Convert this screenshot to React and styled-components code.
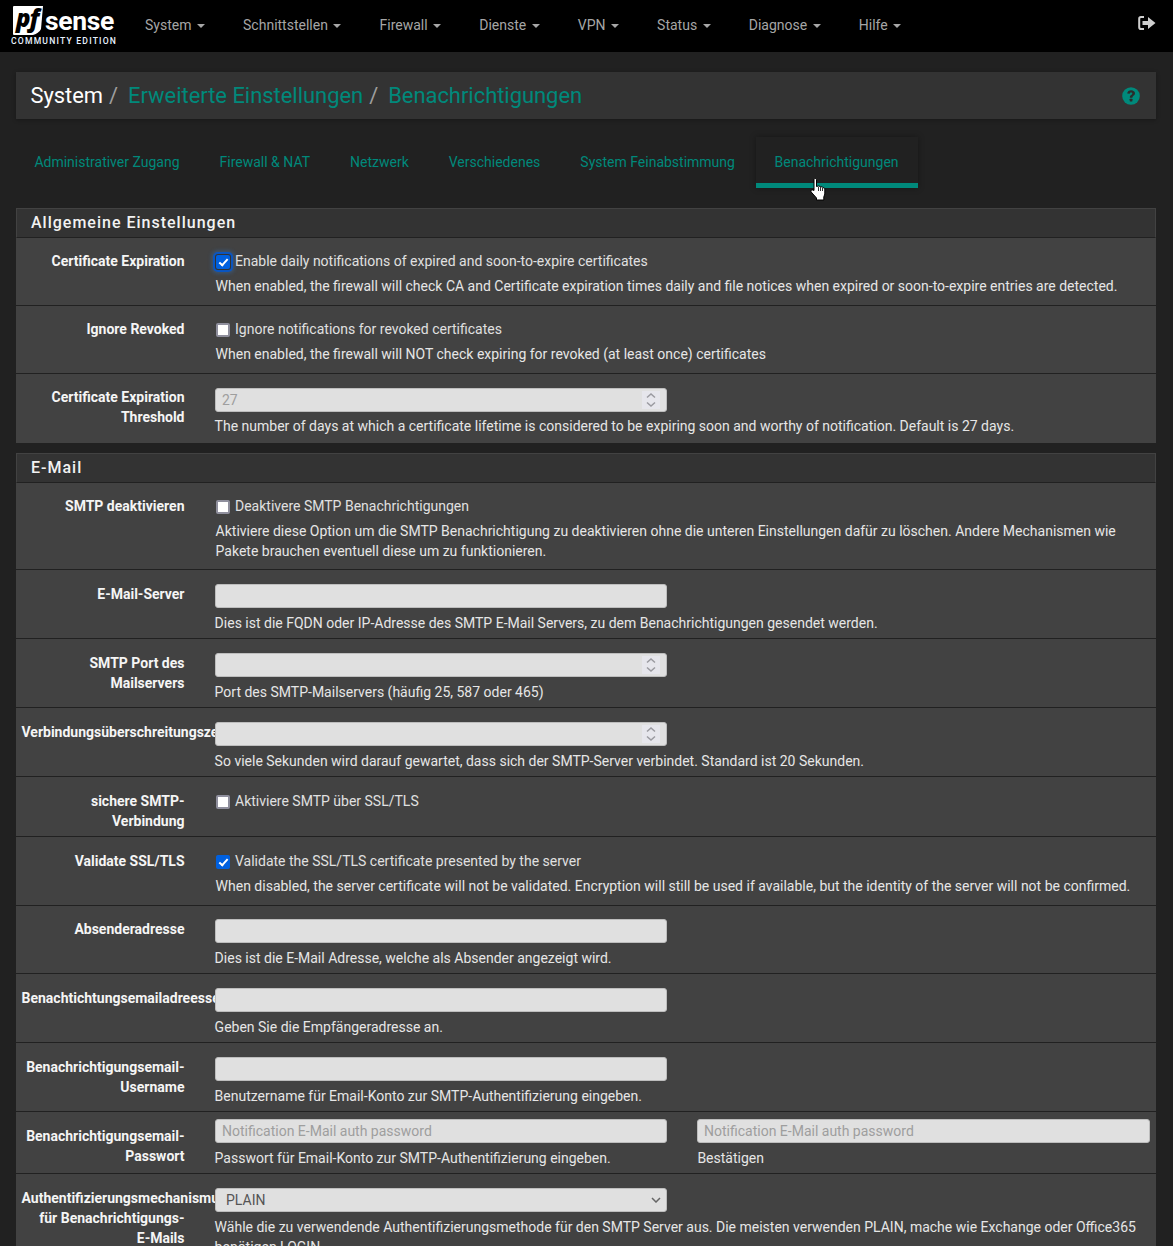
import React from "react";
import styled, { createGlobalStyle } from "styled-components";

const Global = createGlobalStyle`
  html, body { margin: 0; padding: 0; background: #212121; }
  body { font-family: Roboto, "Liberation Sans", sans-serif; font-size: 14px; line-height: 20px; color: #e0e0e0; }
  #root { height: 1246px; overflow: hidden; position: relative; }
`;

const Nav = styled.header`
  height: 52px; background: #000; display: flex; align-items: center; position: relative;
`;
const Logo = styled.div`
  width: 126px; flex: none; height: 52px; display: flex; flex-direction: column; padding: 5px 0 0 11px; box-sizing: border-box;
`;
const LogoTop = styled.div`
  display: flex; align-items: center; height: 31px; margin-left: 2px; gap: 2px;
`;
const LogoWord = styled.span`
  font: 700 26.5px/30px Roboto, sans-serif; color: #fff; letter-spacing: -0.35px; margin-top: 1px;
`;
const LogoSub = styled.span`
  font: 500 8.6px/10px Roboto, sans-serif; letter-spacing: 1.2px; color: #e8f2ff; white-space: nowrap; margin-top: 0;
`;
const NavItem = styled.a`
  padding: 0 19px 3px; color: #a6a6a6; font-size: 14px; display: inline-flex; align-items: center; white-space: nowrap;
`;
const Caret = styled.i`
  display: inline-block; margin-left: 5.6px; margin-top: 2px; width: 0; height: 0; border-top: 4px solid #a6a6a6; border-left: 4px solid transparent; border-right: 4px solid transparent;
`;
const LogoutIcon = styled.svg`
  position: absolute; right: 17px; top: 15px;
`;

const Main = styled.main`
  padding: 20px 17px 0 16px;
`;
const Crumbs = styled.div`
  height: 47px; background: #333; display: flex; align-items: center; padding: 0 16px 0 14.4px; box-shadow: 0 1px 4px rgba(0,0,0,.3);
  font-size: 21.9px;
`;
const Crumb = styled.a`
  color: ${p => (p.$root ? "#fff" : "#00897b")};
`;
const Slash = styled.span`
  color: #9e9e9e; margin: 0 10px 0 6px;
`;
const HelpIcon = styled.svg`
  margin-left: auto;
`;

const Tabs = styled.nav`
  display: flex; gap: 4px; height: 51px; margin-top: 18px; padding-left: 0.4px;
`;
const Tab = styled.a`
  box-sizing: border-box; padding: 15px 18px 0; color: #00897b; font-size: 14px; white-space: nowrap; height: 51px; position: relative;
  ${p => p.$active && "padding-left: 18.6px; padding-right: 19px; margin-left: -1px; border-bottom: 5px solid #00897b; box-shadow: 0 0 6px rgba(0,0,0,.35);"}
`;
const Cursor = styled.svg`
  position: absolute; left: 810px; top: 178px; z-index: 5;
`;

const Panel = styled.section`
  margin-top: ${p => p.$top}px;
`;
const PanelHead = styled.h2`
  margin: 0; height: 30px; box-sizing: border-box; background: #333; border: 1px solid #424242; border-bottom: 1px solid #212121;
  font-size: 16px; font-weight: 500; letter-spacing: 1px; line-height: 28px; padding-left: 14px; color: #f2f2f2;
`;
const Row = styled.div`
  display: grid; grid-template-columns: 184px 1fr; background: #424242; height: ${p => p.$h}px; box-sizing: border-box;
  border-bottom: ${p => (p.$last ? "0" : "1px solid #212121")};
`;
const Label = styled.div`
  padding: ${p => p.$top ?? 13}px 15.5px 0 5.5px; font-weight: 700; text-align: right; color: #f5f5f5;
`;
const NoBreak = styled.span`
  white-space: nowrap;
`;
const Control = styled.div`
  padding: ${p => p.$top ?? 13}px 15px 0 15px; position: relative; min-width: 0;
`;
const CheckLine = styled.label`
  display: flex; align-items: center; height: 20px; margin-left: 1px;
`;
const Check = styled.input.attrs({ type: "checkbox" })`
  appearance: none; box-sizing: border-box; width: 14px; height: 14px; margin: 1px 5px 0 0; flex: none; position: relative;
  background: #fff; border: 2px solid #8f8f9d; border-radius: 2px;
  &:checked { background: #0060df; border-color: #0060df; }
  &:checked::after {
    content: ""; position: absolute; left: 3px; top: 0; width: 3px; height: 7px;
    border: solid #fff; border-width: 0 2px 2px 0; transform: rotate(42deg);
  }
  ${p => p.$focus && "box-shadow: 0 0 0 1px #333, 0 0 0 3px #0a55c0, 0 0 4px 4px rgba(50,120,200,.45);"}
`;
const Help = styled.div`
  margin-top: ${p => p.$mt ?? 5}px; margin-left: ${p => p.$ml ?? -0.4}px; color: #e6e6e6;
`;
const Field = styled.input`
  display: block; width: ${p => p.$w ?? 452}px; height: 24px; box-sizing: border-box; background: #e0e0e0; border: 1px solid #bdbdbd; border-radius: 3px;
  padding: 0 6px; font: 14px Roboto, sans-serif; color: #9e9e9e; outline: none; appearance: none;
  &::placeholder { color: #9e9e9e; opacity: 1; }
  &::-webkit-inner-spin-button { appearance: none; display: none; }
`;
const FieldWrap = styled.div`
  position: relative; width: 452px;
`;
const Spinner = styled.svg`
  position: absolute; right: 7px; top: 3px; background: #e6e6ec;
`;
const SelectArrow = styled.svg`
  position: absolute; right: 6px; top: 9px; pointer-events: none;
`;
const Picker = styled.select`
  display: block; width: 452px; height: 24px; box-sizing: border-box; background: #e0e0e0; border: 1px solid #bdbdbd; border-radius: 3px;
  padding: 0 10px; font: 14px Roboto, sans-serif; color: #555; appearance: none;
`;
const Pair = styled.div`
  display: grid; grid-template-columns: 452px 453px; column-gap: 30px;
`;

const navs = ["System", "Schnittstellen", "Firewall", "Dienste", "VPN", "Status", "Diagnose", "Hilfe"];
const tabs = ["Administrativer Zugang", "Firewall & NAT", "Netzwerk", "Verschiedenes", "System Feinabstimmung", "Benachrichtigungen"];

const NumberField = ({ value }) => (
  <FieldWrap>
    <Field type="number" defaultValue={value} />
    <Spinner width="18" height="18" viewBox="0 0 18 18" aria-hidden="true">
      <path d="M5 6.5L9 3L13 6.5M5 11.5L9 15L13 11.5" fill="none" stroke="#9a9aa0" strokeWidth="1.5" />
    </Spinner>
  </FieldWrap>
);

const TextRow = ({ label, help, h, type = "text", value, last, top = 14, labelTop, helpGap }) => (
  <Row $h={h} $last={last}>
    <Label $top={labelTop ?? top}>{label}</Label>
    <Control $top={top}>
      {type === "number" ? <NumberField value={value} /> : <Field type={type} defaultValue={value} />}
      <Help $mt={helpGap}>{help}</Help>
    </Control>
  </Row>
);

const CheckRow = ({ label, text, help, h, checked, focus, last, top = 13 }) => (
  <Row $h={h} $last={last}>
    <Label $top={top}>{label}</Label>
    <Control $top={top}>
      <CheckLine>
        <Check defaultChecked={checked} $focus={focus} />
        {text}
      </CheckLine>
      {help && <Help $ml={0.6}>{help}</Help>}
    </Control>
  </Row>
);

export default function App() {
  return (
    <>
      <Global />
      <Nav>
        <Logo>
          <LogoTop>
            <svg width="30" height="31" viewBox="0 0 30 31" aria-hidden="true">
              <path d="M1 1H30L28 24Q26 28 20 30H1Q0 30 0 29V2Q0 1 1 1Z" fill="#fff" />
              <text x="3" y="22" fontFamily="'Open Sans', sans-serif" fontStyle="italic" fontWeight="800" fontSize="24" letterSpacing="-1" fill="#000">pf</text>
            </svg>
            <LogoWord>sense</LogoWord>
          </LogoTop>
          <LogoSub>COMMUNITY EDITION</LogoSub>
        </Logo>
        {navs.map(n => (
          <NavItem key={n}>{n}<Caret /></NavItem>
        ))}
        <LogoutIcon width="18" height="16" viewBox="0 0 18 16" aria-hidden="true">
          <path d="M6 2H3Q1.2 2 1.2 3.8V12.2Q1.2 14 3 14H6" fill="none" stroke="#cfcfcf" strokeWidth="2" />
          <path d="M4.5 6H10V2L17.5 8L10 14V10H4.5Z" fill="#cfcfcf" />
        </LogoutIcon>
      </Nav>
      <Main>
        <Crumbs>
          <Crumb $root>System</Crumb><Slash>/</Slash>
          <Crumb>Erweiterte Einstellungen</Crumb><Slash>/</Slash>
          <Crumb>Benachrichtigungen</Crumb>
          <HelpIcon width="18" height="18" viewBox="0 0 18 18" aria-hidden="true">
            <circle cx="9" cy="9" r="8.8" fill="#00897b" />
            <path d="M5.2 6.6C5.3 4.4 7 3.2 9.1 3.2C11.3 3.2 13 4.5 13 6.3C13 8.6 10.4 8.7 10.4 10.8H7.8C7.8 7.9 10.3 8 10.3 6.5C10.3 5.9 9.8 5.5 9.1 5.5C8.3 5.5 7.8 6 7.7 6.8Z" fill="#2b2b2b" />
            <rect x="7.7" y="11.8" width="2.7" height="2.6" rx=".4" fill="#2b2b2b" />
          </HelpIcon>
        </Crumbs>
        <Tabs>
          {tabs.map((t, i) => (
            <Tab key={t} $active={i === 5}>{t}</Tab>
          ))}
        </Tabs>
        <Panel $top={20}>
          <PanelHead>Allgemeine Einstellungen</PanelHead>
          <CheckRow h={68} label="Certificate Expiration" checked focus
            text="Enable daily notifications of expired and soon-to-expire certificates"
            help="When enabled, the firewall will check CA and Certificate expiration times daily and file notices when expired or soon-to-expire entries are detected." />
          <CheckRow h={68} label="Ignore Revoked"
            text="Ignore notifications for revoked certificates"
            help="When enabled, the firewall will NOT check expiring for revoked (at least once) certificates" />
          <TextRow h={69} top={14} labelTop={13} helpGap={4} last type="number" value="27" label="Certificate Expiration Threshold"
            help="The number of days at which a certificate lifetime is considered to be expiring soon and worthy of notification. Default is 27 days." />
        </Panel>
        <Panel $top={10}>
          <PanelHead>E-Mail</PanelHead>
          <CheckRow h={87} label="SMTP deaktivieren"
            text="Deaktivere SMTP Benachrichtigungen"
            help="Aktiviere diese Option um die SMTP Benachrichtigung zu deaktivieren ohne die unteren Einstellungen dafür zu löschen. Andere Mechanismen wie Pakete brauchen eventuell diese um zu funktionieren." />
          <TextRow h={69} label="E-Mail-Server"
            help="Dies ist die FQDN oder IP-Adresse des SMTP E-Mail Servers, zu dem Benachrichtigungen gesendet werden." />
          <TextRow h={69} type="number" label="SMTP Port des Mailservers"
            help="Port des SMTP-Mailservers (häufig 25, 587 oder 465)" />
          <TextRow h={69} type="number" label="Verbindungsüberschreitungszeit"
            help="So viele Sekunden wird darauf gewartet, dass sich der SMTP-Server verbindet. Standard ist 20 Sekunden." />
          <CheckRow h={60} top={14} label="sichere SMTP-Verbindung" text="Aktiviere SMTP über SSL/TLS" />
          <CheckRow h={69} top={14} label="Validate SSL/TLS" checked
            text="Validate the SSL/TLS certificate presented by the server"
            help="When disabled, the server certificate will not be validated. Encryption will still be used if available, but the identity of the server will not be confirmed." />
          <TextRow h={68} top={13} label="Absenderadresse" help="Dies ist die E-Mail Adresse, welche als Absender angezeigt wird." />
          <TextRow h={69} label="Benachtichtungsemailadreesse" help="Geben Sie die Empfängeradresse an." />
          <TextRow h={69} label="Benachrichtigungsemail-Username" help="Benutzername für Email-Konto zur SMTP-Authentifizierung eingeben." />
          <Row $h={62}>
            <Label $top={14}>Benachrichtigungsemail-Passwort</Label>
            <Control $top={7}>
              <Pair>
                <div>
                  <Field type="password" placeholder="Notification E-Mail auth password" />
                  <Help>Passwort für Email-Konto zur SMTP-Authentifizierung eingeben.</Help>
                </div>
                <div>
                  <Field type="password" $w={453} placeholder="Notification E-Mail auth password" />
                  <Help $ml={0.4}>Bestätigen</Help>
                </div>
              </Pair>
            </Control>
          </Row>
          <Row $h={100} $last>
            <Label $top={14}>Authentifizierungsmechanismus für Benachrichtigungs-<NoBreak>E-Mails</NoBreak></Label>
            <Control $top={14}>
              <FieldWrap>
                <Picker defaultValue="PLAIN">
                  <option>PLAIN</option>
                  <option>LOGIN</option>
                </Picker>
                <SelectArrow width="10" height="6" viewBox="0 0 10 6" aria-hidden="true">
                  <path d="M1 1L5 5L9 1" fill="none" stroke="#666" strokeWidth="1.5" />
                </SelectArrow>
              </FieldWrap>
              <Help>Wähle die zu verwendende Authentifizierungsmethode für den SMTP Server aus. Die meisten verwenden PLAIN, mache wie Exchange oder Office365 benötigen LOGIN.</Help>
            </Control>
          </Row>
        </Panel>
      </Main>
      <Cursor width="16" height="23" viewBox="0 0 16 23" aria-hidden="true">
        <path d="M4 1.5C4 .2 6.5 .2 6.5 1.5V8.5L8.5 8L10.5 8.5L12.5 9.2L14.8 10.5V16L13.8 19V22H6.5V20L1.2 14C.2 12.5 2 11 4 12.5Z" fill="#fff" stroke="#000" strokeWidth="1" />
        <path d="M8.5 9V13M10.5 9V13M12.5 10V13" fill="none" stroke="#000" strokeWidth=".8" />
      </Cursor>
    </>
  );
}
